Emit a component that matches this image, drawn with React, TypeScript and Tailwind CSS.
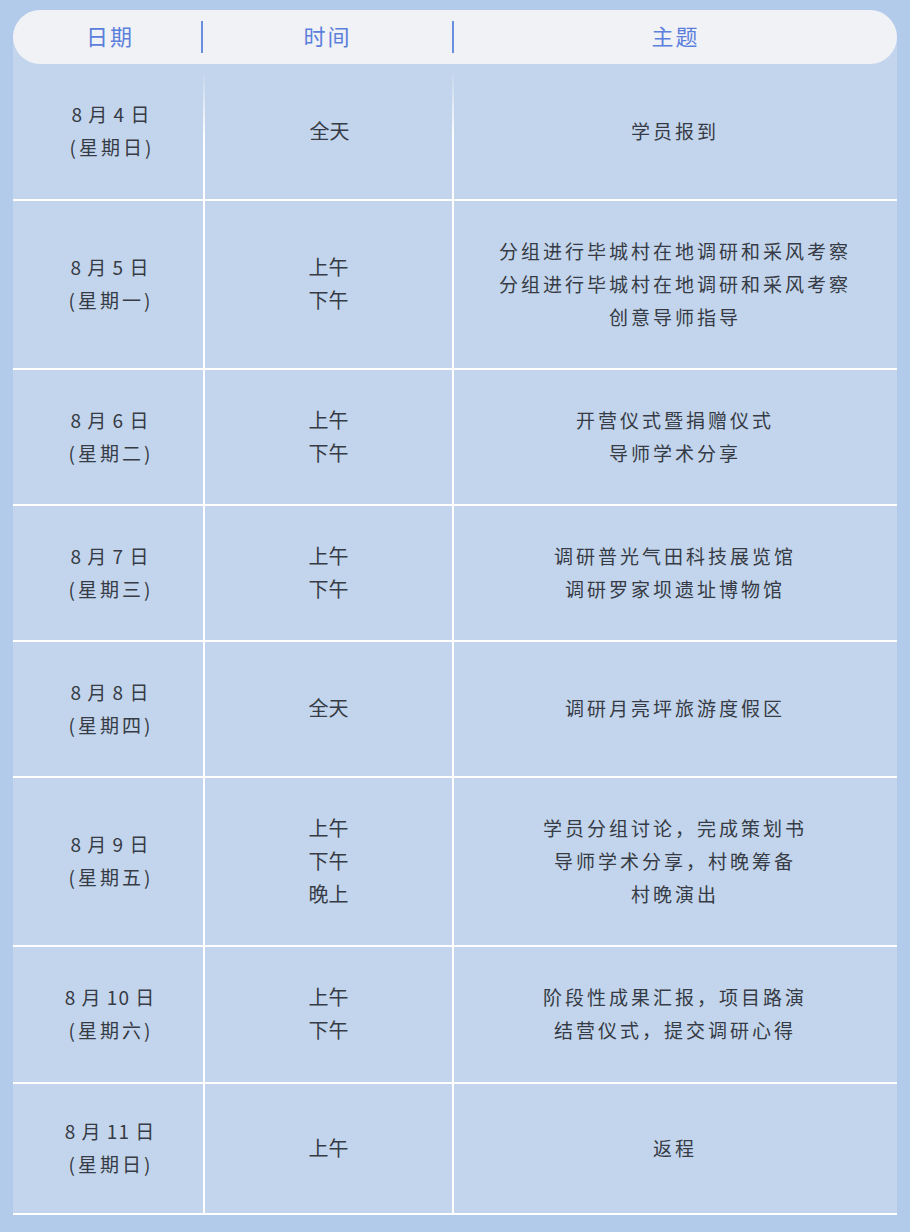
import React from "react";

type Row = { h: string; date: string; week: string; times: string[]; topics: string[] };

const rows: Row[] = [
  { h: "h-[137px]", date: "8 月 4 日", week: "(星期日)", times: ["全天"], topics: ["学员报到"] },
  { h: "h-[169px]", date: "8 月 5 日", week: "(星期一)", times: ["上午", "下午"], topics: ["分组进行毕城村在地调研和采风考察", "分组进行毕城村在地调研和采风考察", "创意导师指导"] },
  { h: "h-[136px]", date: "8 月 6 日", week: "(星期二)", times: ["上午", "下午"], topics: ["开营仪式暨捐赠仪式", "导师学术分享"] },
  { h: "h-[136px]", date: "8 月 7 日", week: "(星期三)", times: ["上午", "下午"], topics: ["调研普光气田科技展览馆", "调研罗家坝遗址博物馆"] },
  { h: "h-[136px]", date: "8 月 8 日", week: "(星期四)", times: ["全天"], topics: ["调研月亮坪旅游度假区"] },
  { h: "h-[169px]", date: "8 月 9 日", week: "(星期五)", times: ["上午", "下午", "晚上"], topics: ["学员分组讨论，完成策划书", "导师学术分享，村晚筹备", "村晚演出"] },
  { h: "h-[137px]", date: "8 月 10 日", week: "(星期六)", times: ["上午", "下午"], topics: ["阶段性成果汇报，项目路演", "结营仪式，提交调研心得"] },
  { h: "h-[131px]", date: "8 月 11 日", week: "(星期日)", times: ["上午"], topics: ["返程"] },
];

const font = { fontFamily: '"Noto Sans CJK SC", "Noto Sans", sans-serif' };

const fadeCell =
  "flex flex-col items-center justify-center pb-[3px] bg-[linear-gradient(to_bottom,rgba(255,255,255,0)_5%,#ffffff_55%)] bg-no-repeat bg-right bg-[length:2px_100%]";
const normalCell = "flex flex-col items-center justify-center pb-[3px] border-r-2 border-white";

export default function App() {
  return (
    <div
      className="w-[910px] h-[1232px] bg-[#b3cbea] pt-[10px] px-[13px] overflow-hidden"
      style={font}
    >
      <div className="bg-[linear-gradient(to_bottom,transparent_27px,#c3d5ec_27px)]">
        {/* header */}
        <div className="h-[54px] rounded-[27px] bg-[#f1f2f6] flex items-center text-[22px] tracking-[2px] text-[#5b80dc]">
          <div className="w-[188px] flex justify-center pl-[6px] pb-[3px]">日期</div>
          <div className="w-[2px] h-[32px] bg-[#6a8ee0]" />
          <div className="w-[249px] flex justify-center pb-[3px]">时间</div>
          <div className="w-[2px] h-[32px] bg-[#6a8ee0]" />
          <div className="flex-1 flex justify-center pb-[3px]">主题</div>
        </div>
        {/* body */}
        {rows.map((r, i) => (
          <div
            key={i}
            className={`${r.h} grid grid-cols-[192px_249px_442px] border-b-2 border-white text-[19px] leading-[33px] text-[#363b45]`}
          >
            <div className={i === 0 ? fadeCell : normalCell}>
              <div className="tracking-[1px] pl-[4px]">{r.date}</div>
              <div className="tracking-[3px] pl-[6px]">{r.week}</div>
            </div>
            <div className={i === 0 ? fadeCell : normalCell}>
              {r.times.map((t, j) => (
                <div key={j} className="text-[20px]">{t}</div>
              ))}
            </div>
            <div className="flex flex-col items-center justify-center pb-[3px] tracking-[3px]">
              {r.topics.map((t, j) => (
                <div key={j}>{t}</div>
              ))}
            </div>
          </div>
        ))}
      </div>
    </div>
  );
}
